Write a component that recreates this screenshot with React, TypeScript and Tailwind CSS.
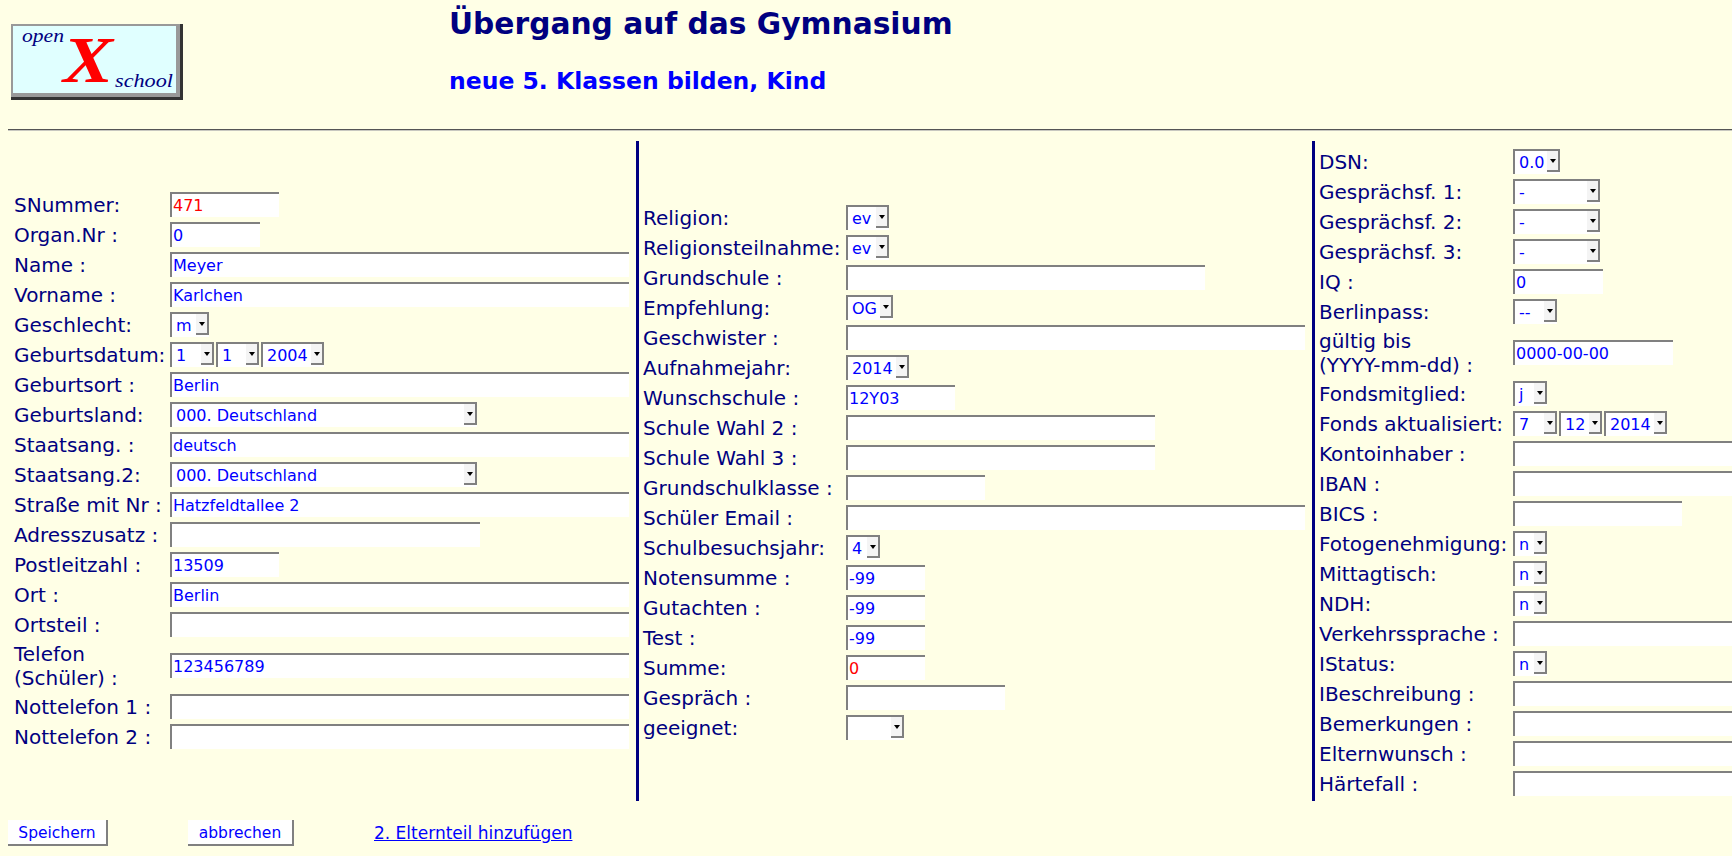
import React from "react";

function Box({ value = "", w, red }: { value?: string; w: string; red?: boolean }) {
  return (
    <div className={`${w} h-[25px] shrink-0 bg-white border-t-2 border-l-2 border-[#808080] pl-px flex items-center text-[16px] leading-none whitespace-nowrap ${red ? "text-[#ff0000]" : "text-[#0000ff]"}`}>
      {value}
    </div>
  );
}

function Pick({ value = "", w }: { value?: string; w: string }) {
  return (
    <div className={`${w} h-[25px] shrink-0 bg-white border-t-2 border-l-2 border-[#808080] flex items-start`}>
      <span className="flex-1 min-w-0 pl-[4px] h-[23px] flex items-center text-[16px] leading-none text-[#0000ff] whitespace-nowrap overflow-hidden">{value}</span>
      <span className="w-[13px] h-[21px] shrink-0 bg-[#f4f4f4] border-r-2 border-b-2 border-[#808080] flex items-center justify-center">
        <svg width="6" height="4" viewBox="0 0 6 4"><path d="M0 0h6L3 4z" fill="#000" /></svg>
      </span>
    </div>
  );
}

function Row({ label, labelW, tall, children }: { label: React.ReactNode; labelW: string; tall?: boolean; children: React.ReactNode }) {
  return (
    <div className={`flex items-center mb-[5px] ${tall ? "h-[47px]" : "h-[25px]"}`}>
      <div className={`${labelW} shrink-0 text-[20px] leading-[24px] text-[#000080] whitespace-nowrap`}>{label}</div>
      <div className="flex gap-[2px]">{children}</div>
    </div>
  );
}

const L = "w-[156px]";
const M = "w-[203px]";
const R = "w-[194px]";
const FULL = "w-[459px]";

export default function App() {
  return (
    <div className="w-[1732px] h-[856px] overflow-hidden bg-[#ffffe6] font-['DejaVu_Sans',sans-serif] pl-2">
      <header className="h-[129px] flex">
        <svg width="172" height="76" viewBox="0 0 172 76" className="ml-[3px] mt-[24px] shrink-0 w-[172px] h-[76px]">
          <rect width="172" height="76" fill="#333" />
          <rect width="169" height="73" fill="#999" />
          <rect x="2" y="2" width="163" height="67" fill="#e0ffff" />
          <text x="11" y="18" fontFamily="Liberation Serif" fontStyle="italic" fontSize="19" textLength="42" lengthAdjust="spacingAndGlyphs" fill="#000080">open</text>
          <text x="52" y="58" fontFamily="Liberation Serif" fontStyle="italic" fontWeight="bold" fontSize="65" textLength="50" lengthAdjust="spacingAndGlyphs" fill="#ff0000">X</text>
          <text x="104" y="63" fontFamily="Liberation Serif" fontStyle="italic" fontSize="19" textLength="58" lengthAdjust="spacingAndGlyphs" fill="#000080">school</text>
        </svg>
        <div className="ml-[266px]">
          <h1 className="text-[29.7px] leading-[34px] mt-[7px] font-bold text-[#000080] whitespace-nowrap">Übergang auf das Gymnasium</h1>
          <h2 className="text-[23.5px] leading-[28px] mt-[26px] font-bold text-[#0000ff] whitespace-nowrap">neue 5. Klassen bilden, Kind</h2>
        </div>
      </header>
      <div className="h-[2px] border-t border-[#555555] bg-[#c8c8c0]" />

      <main className="flex h-[660px] mt-[10px]">
        <section className="w-[628px] shrink-0 pl-[6px] pt-[51px]">
          <Row labelW={L} label="SNummer:"><Box w="w-[109px]" value="471" red /></Row>
          <Row labelW={L} label="Organ.Nr :"><Box w="w-[90px]" value="0" /></Row>
          <Row labelW={L} label="Name :"><Box w={FULL} value="Meyer" /></Row>
          <Row labelW={L} label="Vorname :"><Box w={FULL} value="Karlchen" /></Row>
          <Row labelW={L} label="Geschlecht:"><Pick w="w-[39px]" value="m" /></Row>
          <Row labelW={L} label="Geburtsdatum:">
            <Pick w="w-[44px]" value="1" />
            <Pick w="w-[43px]" value="1" />
            <Pick w="w-[63px]" value="2004" />
          </Row>
          <Row labelW={L} label="Geburtsort :"><Box w={FULL} value="Berlin" /></Row>
          <Row labelW={L} label="Geburtsland:"><Pick w="w-[307px]" value="000. Deutschland" /></Row>
          <Row labelW={L} label="Staatsang. :"><Box w={FULL} value="deutsch" /></Row>
          <Row labelW={L} label="Staatsang.2:"><Pick w="w-[307px]" value="000. Deutschland" /></Row>
          <Row labelW={L} label="Straße mit Nr :"><Box w={FULL} value="Hatzfeldtallee 2" /></Row>
          <Row labelW={L} label="Adresszusatz :"><Box w="w-[310px]" /></Row>
          <Row labelW={L} label="Postleitzahl :"><Box w="w-[109px]" value="13509" /></Row>
          <Row labelW={L} label="Ort :"><Box w={FULL} value="Berlin" /></Row>
          <Row labelW={L} label="Ortsteil :"><Box w={FULL} /></Row>
          <Row labelW={L} tall label={<>Telefon<br />(Schüler) :</>}><Box w={FULL} value="123456789" /></Row>
          <Row labelW={L} label="Nottelefon 1 :"><Box w={FULL} /></Row>
          <Row labelW={L} label="Nottelefon 2 :"><Box w={FULL} /></Row>
        </section>

        <section className="w-[676px] shrink-0 border-l-[3px] border-[#000080] pl-[4px] pt-[64px]">
          <Row labelW={M} label="Religion:"><Pick w="w-[43px]" value="ev" /></Row>
          <Row labelW={M} label="Religionsteilnahme:"><Pick w="w-[43px]" value="ev" /></Row>
          <Row labelW={M} label="Grundschule :"><Box w="w-[359px]" /></Row>
          <Row labelW={M} label="Empfehlung:"><Pick w="w-[47px]" value="OG" /></Row>
          <Row labelW={M} label="Geschwister :"><Box w={FULL} /></Row>
          <Row labelW={M} label="Aufnahmejahr:"><Pick w="w-[63px]" value="2014" /></Row>
          <Row labelW={M} label="Wunschschule :"><Box w="w-[109px]" value="12Y03" /></Row>
          <Row labelW={M} label="Schule Wahl 2 :"><Box w="w-[309px]" /></Row>
          <Row labelW={M} label="Schule Wahl 3 :"><Box w="w-[309px]" /></Row>
          <Row labelW={M} label="Grundschulklasse :"><Box w="w-[139px]" /></Row>
          <Row labelW={M} label="Schüler Email :"><Box w={FULL} /></Row>
          <Row labelW={M} label="Schulbesuchsjahr:"><Pick w="w-[34px]" value="4" /></Row>
          <Row labelW={M} label="Notensumme :"><Box w="w-[79px]" value="-99" /></Row>
          <Row labelW={M} label="Gutachten :"><Box w="w-[79px]" value="-99" /></Row>
          <Row labelW={M} label="Test :"><Box w="w-[79px]" value="-99" /></Row>
          <Row labelW={M} label="Summe:"><Box w="w-[79px]" value="0" red /></Row>
          <Row labelW={M} label="Gespräch :"><Box w="w-[159px]" /></Row>
          <Row labelW={M} label="geeignet:"><Pick w="w-[58px]" /></Row>
        </section>

        <section className="flex-1 min-w-0 border-l-[3px] border-[#000080] pl-[4px] pt-[8px]">
          <Row labelW={R} label="DSN:"><Pick w="w-[47px]" value="0.0" /></Row>
          <Row labelW={R} label="Gesprächsf. 1:"><Pick w="w-[87px]" value="-" /></Row>
          <Row labelW={R} label="Gesprächsf. 2:"><Pick w="w-[87px]" value="-" /></Row>
          <Row labelW={R} label="Gesprächsf. 3:"><Pick w="w-[87px]" value="-" /></Row>
          <Row labelW={R} label="IQ :"><Box w="w-[90px]" value="0" /></Row>
          <Row labelW={R} label="Berlinpass:"><Pick w="w-[44px]" value="--" /></Row>
          <Row labelW={R} tall label={<>gültig bis<br />(YYYY-mm-dd) :</>}><Box w="w-[160px]" value="0000-00-00" /></Row>
          <Row labelW={R} label="Fondsmitglied:"><Pick w="w-[34px]" value="j" /></Row>
          <Row labelW={R} label="Fonds aktualisiert:">
            <Pick w="w-[44px]" value="7" />
            <Pick w="w-[43px]" value="12" />
            <Pick w="w-[63px]" value="2014" />
          </Row>
          <Row labelW={R} label="Kontoinhaber :"><Box w={FULL} /></Row>
          <Row labelW={R} label="IBAN :"><Box w={FULL} /></Row>
          <Row labelW={R} label="BICS :"><Box w="w-[169px]" /></Row>
          <Row labelW={R} label="Fotogenehmigung:"><Pick w="w-[34px]" value="n" /></Row>
          <Row labelW={R} label="Mittagtisch:"><Pick w="w-[34px]" value="n" /></Row>
          <Row labelW={R} label="NDH:"><Pick w="w-[34px]" value="n" /></Row>
          <Row labelW={R} label="Verkehrssprache :"><Box w={FULL} /></Row>
          <Row labelW={R} label="IStatus:"><Pick w="w-[34px]" value="n" /></Row>
          <Row labelW={R} label="IBeschreibung :"><Box w={FULL} /></Row>
          <Row labelW={R} label="Bemerkungen :"><Box w={FULL} /></Row>
          <Row labelW={R} label="Elternwunsch :"><Box w={FULL} /></Row>
          <Row labelW={R} label="Härtefall :"><Box w={FULL} /></Row>
        </section>
      </main>

      <footer className="flex items-center mt-[19px]">
        <button className="w-[100px] h-[26px] pt-[3px] bg-white border-r-2 border-b-2 border-[#808080] text-[15.5px] leading-none text-[#0000ff]">Speichern</button>
        <button className="w-[106px] h-[26px] pt-[3px] ml-[80px] bg-white border-r-2 border-b-2 border-[#808080] text-[15.5px] leading-none text-[#0000ff]">abbrechen</button>
        <a href="#" className="ml-[80px] pt-px text-[17px] text-[#0000ff] underline">2. Elternteil hinzufügen</a>
      </footer>
    </div>
  );
}
